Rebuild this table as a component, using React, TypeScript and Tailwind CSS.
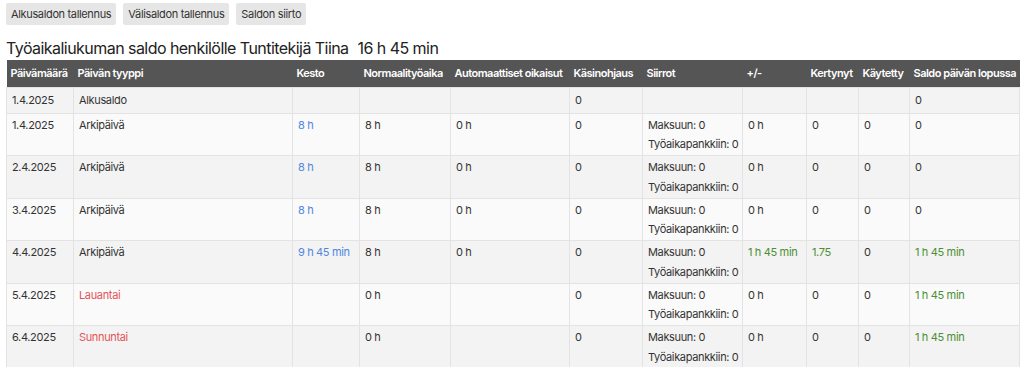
import React from "react";

type Row = {
  date: string;
  type: string;
  weekend?: boolean;
  kesto: string;
  normal: string;
  auto: string;
  manual: string;
  diff: string;
  accrued: string;
  used: string;
  saldo: string;
  first?: boolean;
};

const rows: Row[] = [
  { date: "1.4.2025", type: "Alkusaldo", kesto: "", normal: "", auto: "", manual: "0", diff: "", accrued: "", used: "", saldo: "0", first: true },
  { date: "1.4.2025", type: "Arkipäivä", kesto: "8 h", normal: "8 h", auto: "0 h", manual: "0", diff: "0 h", accrued: "0", used: "0", saldo: "0" },
  { date: "2.4.2025", type: "Arkipäivä", kesto: "8 h", normal: "8 h", auto: "0 h", manual: "0", diff: "0 h", accrued: "0", used: "0", saldo: "0" },
  { date: "3.4.2025", type: "Arkipäivä", kesto: "8 h", normal: "8 h", auto: "0 h", manual: "0", diff: "0 h", accrued: "0", used: "0", saldo: "0" },
  { date: "4.4.2025", type: "Arkipäivä", kesto: "9 h 45 min", normal: "8 h", auto: "0 h", manual: "0", diff: "1 h 45 min", accrued: "1.75", used: "0", saldo: "1 h 45 min" },
  { date: "5.4.2025", type: "Lauantai", weekend: true, kesto: "", normal: "0 h", auto: "", manual: "0", diff: "0 h", accrued: "0", used: "0", saldo: "1 h 45 min" },
  { date: "6.4.2025", type: "Sunnuntai", weekend: true, kesto: "", normal: "0 h", auto: "", manual: "0", diff: "0 h", accrued: "0", used: "0", saldo: "1 h 45 min" },
];

const headers = [
  { label: "Päivämäärä", w: "w-[67px]" },
  { label: "Päivän tyyppi", w: "w-[219px]" },
  { label: "Kesto", w: "w-[67px]" },
  { label: "Normaalityöaika", w: "w-[91px]" },
  { label: "Automaattiset oikaisut", w: "w-[119px]" },
  { label: "Käsinohjaus", w: "w-[73px]" },
  { label: "Siirrot", w: "w-[100px]" },
  { label: "+/-", w: "w-[64px]" },
  { label: "Kertynyt", w: "w-[52px]" },
  { label: "Käytetty", w: "w-[51px]" },
  { label: "Saldo päivän lopussa", w: "w-[110px]" },
];

const positive = (v: string) => v !== "" && v !== "0" && v !== "0 h";

export default function App() {
  const td = "border border-[#e3e3e3] px-[5px] pt-[4px] pb-[4px] align-top leading-[14px]";
  const mid = "border border-[#e3e3e3] px-[5px] align-middle leading-[14px]";
  const green = "text-[#4c8f33]";

  return (
    <div className="min-h-[367px] bg-white pl-[6px] pr-[5px] pt-[3px] text-[11px] tracking-[-0.35px] text-[#333] font-['Inter','Noto_Sans',sans-serif]">
      <div className="flex gap-[7px]">
        <button className="h-[22px] rounded-[2px] bg-[#e6e6e6] px-[5px] text-[11px] text-[#333]">Alkusaldon tallennus</button>
        <button className="h-[22px] rounded-[2px] bg-[#e6e6e6] px-[5px] text-[11px] text-[#333]">Välisaldon tallennus</button>
        <button className="h-[22px] rounded-[2px] bg-[#e6e6e6] px-[5px] text-[11px] text-[#333]">Saldon siirto</button>
      </div>

      <h2 className="mt-[12px] text-[16px] leading-[22px] tracking-[-0.55px] text-[#222]">
        Työaikaliukuman saldo henkilölle Tuntitekijä Tiina<span className="ml-[9px]">16 h 45 min</span>
      </h2>

      <table className="mt-[1px] w-[1013px] table-fixed border-collapse">
        <thead>
          <tr className="h-[27px] bg-[#555555] text-white">
            {headers.map((h) => (
              <th key={h.label} className={`${h.w} px-[4px] text-left font-semibold tracking-[-0.5px] whitespace-nowrap`}>
                {h.label}
              </th>
            ))}
          </tr>
        </thead>
        <tbody>
          {rows.map((r, i) => (
            <tr key={i} className={i % 2 === 0 ? "bg-[#f3f3f3]" : "bg-[#fafafa]"}>
              {r.first ? (
                <>
                  <td className={`${mid} h-[26px]`}>{r.date}</td>
                  <td className={mid}>{r.type}</td>
                  <td className={mid}></td>
                  <td className={mid}></td>
                  <td className={mid}></td>
                  <td className={mid}>{r.manual}</td>
                  <td className={mid}></td>
                  <td className={mid}></td>
                  <td className={mid}></td>
                  <td className={mid}></td>
                  <td className={mid}>{r.saldo}</td>
                </>
              ) : (
                <>
                  <td className={td}>{r.date}</td>
                  <td className={`${td} ${r.weekend ? "text-[#e5545a]" : ""}`}>{r.type}</td>
                  <td className={`${td} text-[#4f87e0]`}>{r.kesto}</td>
                  <td className={td}>{r.normal}</td>
                  <td className={td}>{r.auto}</td>
                  <td className={td}>{r.manual}</td>
                  <td className={`${td} whitespace-nowrap`}>
                    <div>Maksuun: 0</div>
                    <div className="mt-[5.5px]">Työaikapankkiin: 0</div>
                  </td>
                  <td className={`${td} ${positive(r.diff) ? green : ""}`}>{r.diff}</td>
                  <td className={`${td} ${positive(r.accrued) ? green : ""}`}>{r.accrued}</td>
                  <td className={td}>{r.used}</td>
                  <td className={`${td} ${positive(r.saldo) ? green : ""}`}>{r.saldo}</td>
                </>
              )}
            </tr>
          ))}
        </tbody>
      </table>
    </div>
  );
}
